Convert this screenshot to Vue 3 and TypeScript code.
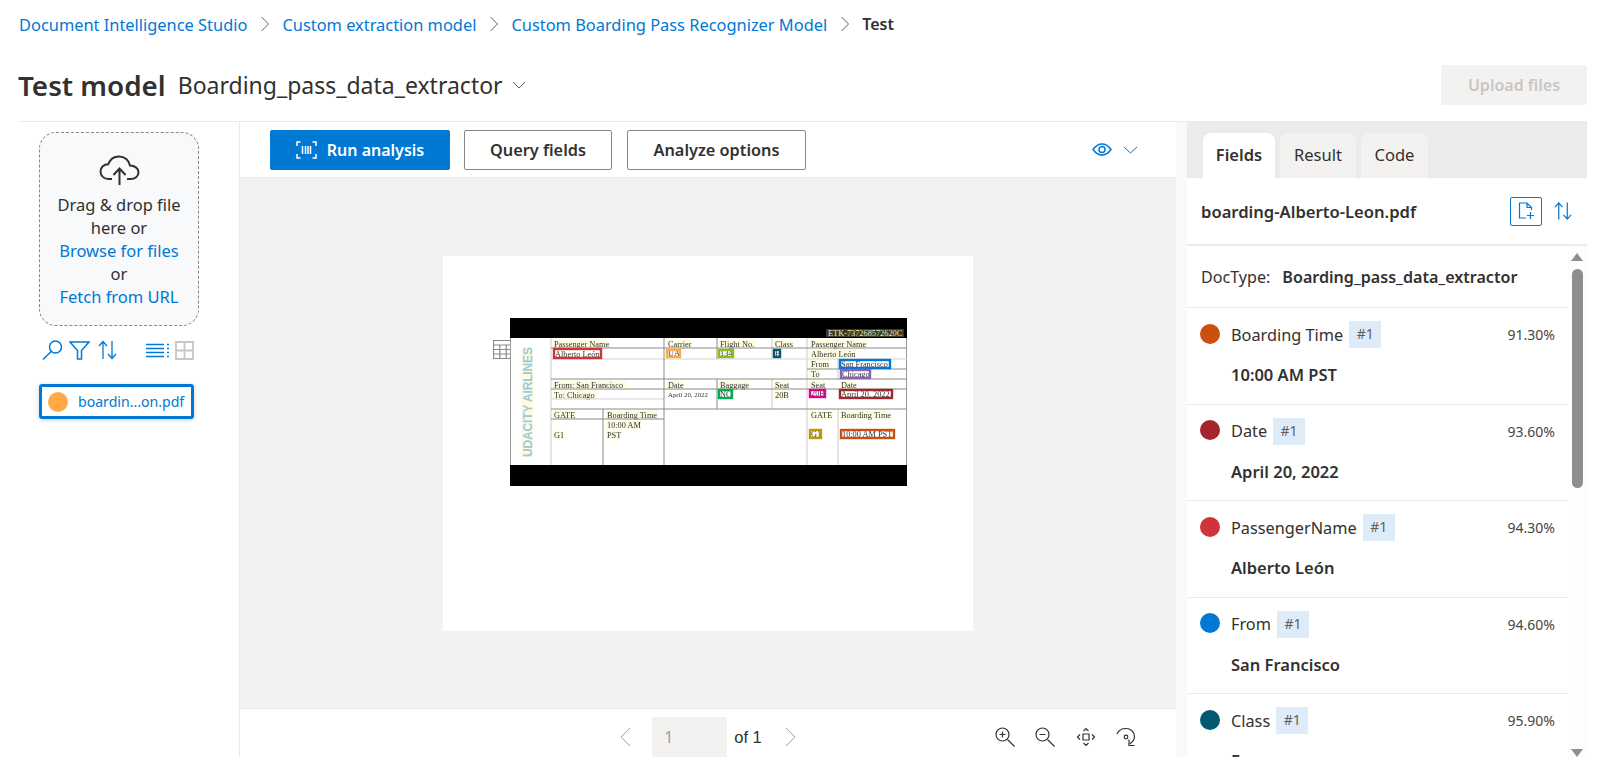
<script setup lang="ts">
const crumbs = ['Document Intelligence Studio', 'Custom extraction model', 'Custom Boarding Pass Recognizer Model']

const fields = [
  { name: 'Boarding Time', value: '10:00 AM PST', score: '91.30%', color: '#ca5010' },
  { name: 'Date', value: 'April 20, 2022', score: '93.60%', color: '#a4262c' },
  { name: 'PassengerName', value: 'Alberto León', score: '94.30%', color: '#d13438' },
  { name: 'From', value: 'San Francisco', score: '94.60%', color: '#0078d4' },
  { name: 'Class', value: 'E', score: '95.90%', color: '#005b70' }
]

// boarding pass drawing, in its own 397x168 coordinates
const darkLines = [
  [154, 20, 154, 147], [207, 20, 207, 41], [207, 61, 207, 91], [41, 30, 397, 30], [41, 61, 397, 61],
  [41, 91, 397, 91], [41, 71, 397, 71], [41, 101, 154, 101], [93, 91, 93, 147], [297, 51, 397, 51]
]
const lightLines = [
  [41, 20, 41, 147], [41, 41, 397, 41], [262, 20, 262, 41], [262, 61, 262, 91], [297, 20, 297, 147],
  [328, 41, 328, 61], [328, 91, 328, 147], [41, 81, 154, 81]
]
const labels = [
  { t: 'Passenger Name', x: 44, y: 26, w: 57 }, { t: 'Carrier', x: 158, y: 26, w: 25 }, { t: 'Flight No.', x: 210, y: 26, w: 36 },
  { t: 'Class', x: 265, y: 26, w: 19 }, { t: 'Passenger Name', x: 301, y: 26, w: 57 }, { t: 'Alberto León', x: 301, y: 36, w: 46 },
  { t: 'From', x: 301, y: 46, w: 19 }, { t: 'To', x: 301, y: 56, w: 9 }, { t: 'From:  San Francisco', x: 44, y: 67, w: 74 },
  { t: 'To: Chicago', x: 44, y: 77, w: 43 }, { t: 'Date', x: 158, y: 67, w: 16 }, { t: 'Baggage', x: 210, y: 67, w: 30 },
  { t: 'Seat', x: 265, y: 67, w: 15 }, { t: '20B', x: 265, y: 77, w: 14 }, { t: 'Seat', x: 301, y: 67, w: 15 }, { t: 'Date', x: 331, y: 67, w: 16 },
  { t: 'GATE', x: 44, y: 97, w: 23 }, { t: 'Boarding Time', x: 97, y: 97, w: 52 }, { t: '10:00 AM', x: 97, y: 107, w: 35 },
  { t: 'PST', x: 97, y: 117, w: 14 }, { t: 'G1', x: 44, y: 117, w: 10 }, { t: 'GATE', x: 301, y: 97, w: 23 }, { t: 'Boarding Time', x: 331, y: 97, w: 52 }
]
const boxes = [
  { t: 'Alberto León', x: 43, y: 30, w: 49, h: 11, c: '#d13438' },
  { t: 'UA', x: 156, y: 31, w: 15, h: 9, c: '#ffaa44' },
  { t: '134', x: 208, y: 31, w: 16, h: 9, c: '#8cbd18' },
  { t: 'E', x: 263, y: 31, w: 8, h: 9, c: '#005b70' },
  { t: 'San Francisco', x: 329, y: 41, w: 52, h: 10, c: '#0078d4' },
  { t: 'Chicago', x: 330, y: 51, w: 31, h: 10, c: '#8764b8' },
  { t: 'NO', x: 208, y: 71, w: 15, h: 10, c: '#00b050' },
  { t: '20B', x: 299, y: 71, w: 17, h: 9, c: '#e3008c' },
  { t: 'April 20, 2022', x: 329, y: 71, w: 54, h: 10, c: '#a4262c' },
  { t: 'G1', x: 299, y: 111, w: 13, h: 10, c: '#c19c00' },
  { t: '10:00 AM PST', x: 330, y: 111, w: 55, h: 10, c: '#ca5010' }
]
</script>

<template>
  <div class="app">
    <nav class="crumbs">
      <template v-for="c in crumbs" :key="c">
        <a class="crumb">{{ c }}</a>
        <svg class="crumb-sep" viewBox="0 0 10 16"><path d="M1.500 1 8.500 8 1.500 15" /></svg>
      </template>
      <b class="crumb-now">Test</b>
    </nav>

    <header class="title-row">
      <h1>Test model</h1>
      <span class="model-name">Boarding_pass_data_extractor</span>
      <svg class="title-chev" viewBox="0 0 14 8"><path d="M1 1l6 6 6-6" /></svg>
      <button class="upload">Upload files</button>
    </header>

    <main class="body">
      <aside class="left">
        <div class="drop">
          <svg class="cloud" viewBox="0 0 41 31">
            <path d="M13 24H9.500C5 24 1.500 20.800 1.500 16.500S5 9.200 9.200 9.200C11 4.500 15 1.500 20 1.500c5.700 0 10 3.800 11 9 4.500 0 8.500 2.800 8.500 6.800S36 24 31.500 24H28" />
            <path d="M20.500 30V14M14.500 20l6-6.500 6 6.500" />
          </svg>
          <p>Drag &amp; drop file<br />here or</p>
          <a>Browse for files</a>
          <p>or</p>
          <a>Fetch from URL</a>
        </div>
        <div class="tools">
          <svg class="t-search" viewBox="0 0 21 20"><circle cx="13.500" cy="7" r="6" /><path d="M9.200 11.500 1 19.500" /></svg>
          <svg class="t-filter" viewBox="0 0 21 19"><path d="M1 1h19l-7.500 8.500V18h-4V9.500z" /></svg>
          <svg class="t-sort" viewBox="0 0 19 20"><path d="M5 19V1.500M1 6l4-4.500L9 6M14 1v17.500M10 14l4 4.500 4-4.500" /></svg>
          <svg class="t-list" viewBox="0 0 23 15"><path d="M0 1.500h18M0 5.500h18M0 9.500h18M0 13.500h18" /><path d="M21 1.500h2M21 5.500h2M21 9.500h2M21 13.500h2" /></svg>
          <svg class="t-grid" viewBox="0 0 19 19"><path d="M1 1h17v17H1zM9.500 1v17M1 9.500h17" /></svg>
        </div>
        <div class="file">
          <span class="file-dot"></span>
          <span>boardin...on.pdf</span>
        </div>
      </aside>

      <section class="center">
        <div class="toolbar">
          <button class="btn primary">
            <svg class="scan" viewBox="0 0 21 18"><path d="M4.500 1H1v4M1 13v4h3.500M16.500 1H20v4M20 13v4h-3.500M6.500 5v8M9.500 5v8M12 5v8M14.500 5v8" /></svg>
            Run analysis
          </button>
          <button class="btn">Query fields</button>
          <button class="btn">Analyze options</button>
          <svg class="eye" viewBox="0 0 20 13"><path d="M1 6.500C3.500 3 6.500 1 10 1s6.500 2 9 5.500c-2.500 3.500-5.500 5.500-9 5.500s-6.500-2-9-5.500z" /><circle cx="10" cy="6.500" r="3" /></svg>
          <svg class="eye-chev" viewBox="0 0 15 8"><path d="M1 1l6.500 6L14 1" /></svg>
        </div>

        <div class="canvas">
          <div class="page">
            <svg class="table-icon" viewBox="0 0 20 19"><path d="M.5.500h19v18H.5zM.5 5h19M.5 9.500h19M.5 14h19M6.800 5v13.500M13.200 5v13.500" /></svg>
            <svg class="pass" viewBox="0 0 397 168">
              <rect x=".5" y=".5" width="396" height="167" fill="#fff" stroke="#999" />
              <rect width="397" height="20" fill="#000" />
              <rect y="147" width="397" height="21" fill="#000" />
              <rect x="316" y="11" width="78" height="8" fill="#3b3a22" />
              <text x="318" y="18" class="etk">ETK-737268572620C</text>
              <rect x="11" y="29" width="12" height="110" fill="#fdfbe0" />
              <text class="airline" transform="translate(21.500 139) rotate(-90)" textLength="110">UDACITY AIRLINES</text>
              <g v-for="l in labels" :key="l.t + l.x + l.y">
                <rect :x="l.x - 1" :y="l.y - 4.500" :width="l.w" height="9" fill="#fdfbe0" />
                <text :x="l.x" :y="l.y + 2.500" class="lab">{{ l.t }}</text>
              </g>
              <line v-for="(l, i) in lightLines" :key="'l' + i" :x1="l[0]" :y1="l[1]" :x2="l[2]" :y2="l[3]" stroke="#d4d4d4" stroke-width="1.200" />
              <line v-for="(l, i) in darkLines" :key="'d' + i" :x1="l[0]" :y1="l[1]" :x2="l[2]" :y2="l[3]" stroke="#8a8a8a" stroke-width="1" />
              <text x="158" y="79" class="lab small">April 20, 2022</text>
              <g v-for="b in boxes" :key="b.t + b.x">
                <text :x="b.x + 2" :y="b.y + b.h - 2.500" class="lab">{{ b.t }}</text>
                <rect :x="b.x + 1" :y="b.y + 1" :width="b.w - 2" :height="b.h - 2" fill="none" :stroke="b.c" stroke-width="2.400" />
              </g>
            </svg>
          </div>
        </div>

        <div class="pager">
          <div class="pages">
            <svg class="page-chev" viewBox="0 0 11 20"><path d="M10 1 1 10l9 9" /></svg>
            <span class="page-input">1</span>
            <span class="page-of">of 1</span>
            <svg class="page-chev" viewBox="0 0 11 20"><path d="M1 1l9 9-9 9" /></svg>
          </div>
          <div class="zooms">
            <svg viewBox="0 0 20 20"><circle cx="7.500" cy="7.500" r="6.500" /><path d="M12.500 12.500 19.500 19.500M4.500 7.500h6M7.500 4.500v6" /></svg>
            <svg viewBox="0 0 20 20"><circle cx="7.500" cy="7.500" r="6.500" /><path d="M12.500 12.500 19.500 19.500M4.500 7.500h6" /></svg>
            <svg viewBox="0 0 20 20"><path d="M7 7h6v6H7zM7.500 4 10 1.500 12.500 4M7.500 16l2.500 2.500 2.500-2.500M4 7.500 1.500 10 4 12.500M16 7.500l2.500 2.500-2.500 2.500" /></svg>
            <svg viewBox="0 0 20 20"><path d="M1 7C2.500 3.500 6 1.500 10 1.500c4.500 0 8.500 3.500 8.500 8 0 3-1.700 5.500-5 7.500" /><path d="M13 12.500v6h5.500" /><circle cx="10" cy="10" r="1.800" /></svg>
          </div>
        </div>
      </section>

      <div class="splitter"></div>

      <aside class="right">
        <div class="tabs">
          <span class="tab active">Fields</span>
          <span class="tab tab-result">Result</span>
          <span class="tab tab-code">Code</span>
        </div>
        <div class="file-head">
          <strong>boarding-Alberto-Leon.pdf</strong>
          <span class="add-doc">
            <svg viewBox="0 0 17 18"><path d="M8 16H1.500V1H9l4.500 4.500V8M9 1v4.500h4.500M12.500 10v7M9 13.500h7" /></svg>
          </span>
          <svg class="head-sort" viewBox="0 0 19 20"><path d="M5 19V1.500M1 6l4-4.500L9 6M14 1v17.500M10 14l4 4.500 4-4.500" /></svg>
        </div>
        <div class="list">
          <div class="doctype">
            <span>DocType:</span>
            <b>Boarding_pass_data_extractor</b>
          </div>
          <div v-for="f in fields" :key="f.name" class="field">
            <div class="field-top">
              <span class="dot" :style="{ background: f.color }"></span>
              <span class="field-name">{{ f.name }}</span>
              <span class="chip">#1</span>
              <span class="score">{{ f.score }}</span>
            </div>
            <div class="field-value">{{ f.value }}</div>
          </div>
          <div class="scrollbar">
            <i class="arrow up"></i>
            <i class="thumb"></i>
            <i class="arrow down"></i>
          </div>
        </div>
      </aside>
    </main>
  </div>
</template>

<style>
html, body {
  margin: 0;
  height: 100%;
  overflow: hidden;
  background: #fff;
}
</style>

<style scoped>
.app {
  width: 1587px;
  height: 757px;
  overflow: hidden;
  display: flex;
  flex-direction: column;
  font-family: "Noto Sans", "Open Sans", sans-serif;
  font-size: 16px;
  color: #323130;
}
svg {
  display: block;
  fill: none;
  stroke: currentColor;
  flex: none;
}
p { margin: 0; }

.crumbs {
  height: 48px;
  flex: none;
  display: flex;
  align-items: center;
  padding-left: 19px;
}
.crumb { color: #0078d4; font-size: 16.400px; }
.crumb-sep { width: 10px; height: 16px; margin: 0 12.500px; color: #605e5c; }
.crumb-now { font-weight: 600; }

.title-row {
  height: 73px;
  flex: none;
  display: flex;
  align-items: center;
  padding-left: 18px;
}
h1 { margin: 0; font-size: 27.800px; font-weight: 600; }
.model-name { font-size: 23px; margin-left: 12px; }
.title-chev { width: 14px; height: 8px; margin-left: 9px; color: #605e5c; }
.upload {
  margin-left: auto;
  width: 146px;
  height: 40px;
  border: 0;
  border-radius: 2px;
  background: #f3f2f1;
  color: #c8c6c4;
  font: 600 16px "Noto Sans", sans-serif;
}

.body {
  flex: 1;
  min-height: 0;
  margin-left: 18px;
  display: flex;
  border-top: 1px solid #edebe9;
}

.left {
  width: 222px;
  flex: none;
  border-right: 1px solid #edebe9;
  padding: 10px 0 0 21px;
  box-sizing: border-box;
}
.drop {
  width: 160px;
  height: 194px;
  box-sizing: border-box;
  border: 1px dashed #8a8886;
  border-radius: 17px;
  background: #f8f9fa;
  padding-top: 22px;
  text-align: center;
  line-height: 23px;
  font-size: 16.500px;
  white-space: nowrap;
}
.drop a { display: block; color: #0078d4; }
.cloud { width: 41px; height: 31px; margin: 0 auto 7px; stroke-width: 2; color: #323130; }
.tools {
  height: 20px;
  margin-top: 14px;
  display: flex;
  align-items: center;
  color: #0078d4;
  width: 176px;
}
.t-search { width: 21px; height: 20px; margin-left: 3px; stroke-width: 1.500; }
.t-filter { width: 21px; height: 19px; margin-left: 6px; stroke-width: 1.500; }
.t-sort { width: 19px; height: 20px; margin-left: 8px; stroke-width: 1.300; }
.t-list { width: 23px; height: 15px; margin-left: 29px; stroke-width: 1.500; }
.t-grid { width: 19px; height: 19px; margin-left: 6px; color: #c8c6c4; stroke-width: 1.800; }
.file {
  margin-top: 24px;
  width: 155px;
  height: 35px;
  box-sizing: border-box;
  border: 3px solid #0078d4;
  border-radius: 3px;
  display: flex;
  align-items: center;
  padding-left: 6px;
  color: #0078d4;
  font-size: 14.100px;
  box-shadow: 0 1px 4px rgba(0, 0, 0, .2);
  white-space: nowrap;
}
.file-dot {
  width: 20px;
  height: 20px;
  flex: none;
  border-radius: 50%;
  background: #ffaa44;
  margin-right: 10px;
}

.center {
  width: 936px;
  flex: none;
  display: flex;
  flex-direction: column;
}
.toolbar {
  height: 56px;
  flex: none;
  box-sizing: border-box;
  border-bottom: 1px solid #edebe9;
  display: flex;
  align-items: center;
  padding: 0 38px 0 30px;
  gap: 14px;
}
.btn {
  height: 40px;
  padding: 0;
  width: 148px;
  border: 1px solid #8a8886;
  border-radius: 2px;
  background: #fff;
  color: #323130;
  font: 600 16.300px "Noto Sans", sans-serif;
  display: flex;
  align-items: center;
  justify-content: center;
}
.btn:nth-child(3) { width: 179px; margin-left: 1px; }
.btn.primary {
  width: 180px;
  background: #0078d4;
  border-color: #0078d4;
  color: #fff;
  gap: 10px;
  font-size: 16px;
}
.scan { width: 21px; height: 18px; stroke-width: 1.500; }
.eye { width: 20px; height: 13px; margin-left: auto; color: #0078d4; stroke-width: 1.500; }
.eye-chev { width: 15px; height: 8px; color: #0078d4; margin-left: -3px; }

.canvas {
  flex: 1;
  min-height: 0;
  background: #f3f2f1;
  display: flex;
  justify-content: center;
  align-items: center;
}
.page {
  position: relative;
  width: 530px;
  height: 375px;
  box-sizing: border-box;
  padding: 62px 0 0 67px;
  background: #fff;
}
.pass {
  display: block;
  width: 397px;
  height: 168px;
  stroke: none;
  filter: blur(.45px);
}
.table-icon {
  position: absolute;
  left: 50px;
  top: 84px;
  width: 20px;
  height: 19px;
  color: #8a8a8a;
  stroke-width: 1.200;
  background: rgba(255, 255, 255, .6);
}
.lab { font: 8.300px "Liberation Serif", serif; fill: #333; stroke: none; }
.lab.small { font-size: 6.800px; }
.etk { font: 8.300px "Liberation Serif", serif; fill: #eee8c8; stroke: none; }
.airline { font: 700 12px "Liberation Sans", sans-serif; fill: #9cc9dc; stroke: none; }

.pager {
  height: 49px;
  flex: none;
  box-sizing: border-box;
  border-top: 1px solid #edebe9;
  display: grid;
  grid-template-columns: 1fr auto 1fr;
  align-items: start;
}
.pages {
  grid-column: 2;
  display: flex;
  align-items: center;
  padding-top: 8px;
  height: 40px;
  color: #a19f9d;
}
.page-chev { width: 11px; height: 20px; }
.page-input {
  width: 75px;
  height: 40px;
  margin-left: 21px;
  background: #f3f2f1;
  border-radius: 2px;
  box-sizing: border-box;
  padding-left: 12px;
  line-height: 40px;
  font-size: 16px;
}
.page-of { margin: 0 23px 0 7px; color: #323130; font: 16.500px "Liberation Sans", sans-serif; }
.zooms {
  grid-column: 3;
  justify-self: end;
  display: flex;
  gap: 20.500px;
  padding: 18px 40px 0 0;
  color: #323130;
}
.zooms svg { width: 20px; height: 20px; stroke-width: 1.200; }

.splitter {
  width: 11px;
  flex: none;
  background: #faf9f8;
}

.right {
  width: 400px;
  flex: none;
  display: flex;
  flex-direction: column;
  min-height: 0;
}
.tabs {
  height: 56px;
  flex: none;
  box-sizing: border-box;
  padding: 11px 0 0 16px;
  background: #edebe9;
  display: flex;
  gap: 5px;
}
.tab {
  width: 72px;
  border-radius: 8px 8px 0 0;
  background: #f3f2f1;
  text-align: center;
  line-height: 44px;
  font-size: 16.500px;
}
.tab.active { background: #fff; font-weight: 600; }
.tab-result { width: 76px; }
.tab-code { width: 67px; }

.file-head {
  height: 68px;
  flex: none;
  box-sizing: border-box;
  border-bottom: 2px solid #edebe9;
  display: flex;
  align-items: center;
  padding-left: 14px;
}
.file-head strong { font-weight: 600; font-size: 16.600px; }
.add-doc {
  margin-left: auto;
  width: 32px;
  height: 29px;
  box-sizing: border-box;
  border: 1px solid #0078d4;
  border-radius: 2px;
  color: #0078d4;
  display: flex;
  align-items: center;
  justify-content: center;
}
.add-doc svg { width: 17px; height: 18px; stroke-width: 1.200; }
.head-sort { width: 18px; height: 20px; margin: 0 15px 0 12px; color: #0078d4; stroke-width: 1.300; }

.list {
  position: relative;
  flex: 1;
  min-height: 0;
  overflow: hidden;
  padding-right: 19px;
}
.doctype {
  height: 62px;
  box-sizing: border-box;
  border-bottom: 1px solid #edebe9;
  padding-left: 14px;
  display: flex;
  align-items: center;
  gap: 12px;
  font-size: 16.100px;
}
.doctype b { font-weight: 600; }
.field {
  height: 96.500px;
  box-sizing: border-box;
  border-bottom: 1px solid #edebe9;
  padding: 13px 13px 0 13px;
}
.field-top {
  display: flex;
  align-items: center;
  height: 27px;
}
.dot {
  width: 20px;
  height: 20px;
  border-radius: 50%;
  margin-right: 11px;
  flex: none;
  position: relative;
  top: -1px;
}
.field-name { font-size: 16.300px; }
.chip {
  width: 32px;
  height: 27px;
  margin-left: 6px;
  background: #deecf9;
  text-align: center;
  line-height: 26px;
  font-size: 14px;
  color: #605e5c;
}
.score { margin-left: auto; font-size: 14px; color: #484644; }
.field-value {
  margin: 15px 0 0 31px;
  font-weight: 600;
  font-size: 16.500px;
  line-height: 24px;
}
.scrollbar {
  position: absolute;
  top: 0;
  right: 0;
  bottom: 0;
  width: 19px;
  background: #fdfdfd;
}
.scrollbar i { position: absolute; display: block; }
.thumb {
  left: 4px;
  top: 23px;
  width: 11px;
  height: 219px;
  border-radius: 6px;
  background: #8e8e8e;
}
.arrow {
  left: 3px;
  width: 0;
  height: 0;
  border-left: 6px solid transparent;
  border-right: 6px solid transparent;
}
.arrow.up { top: 7px; border-bottom: 8px solid #8e8e8e; }
.arrow.down { bottom: 0; border-top: 8px solid #8e8e8e; }
</style>
